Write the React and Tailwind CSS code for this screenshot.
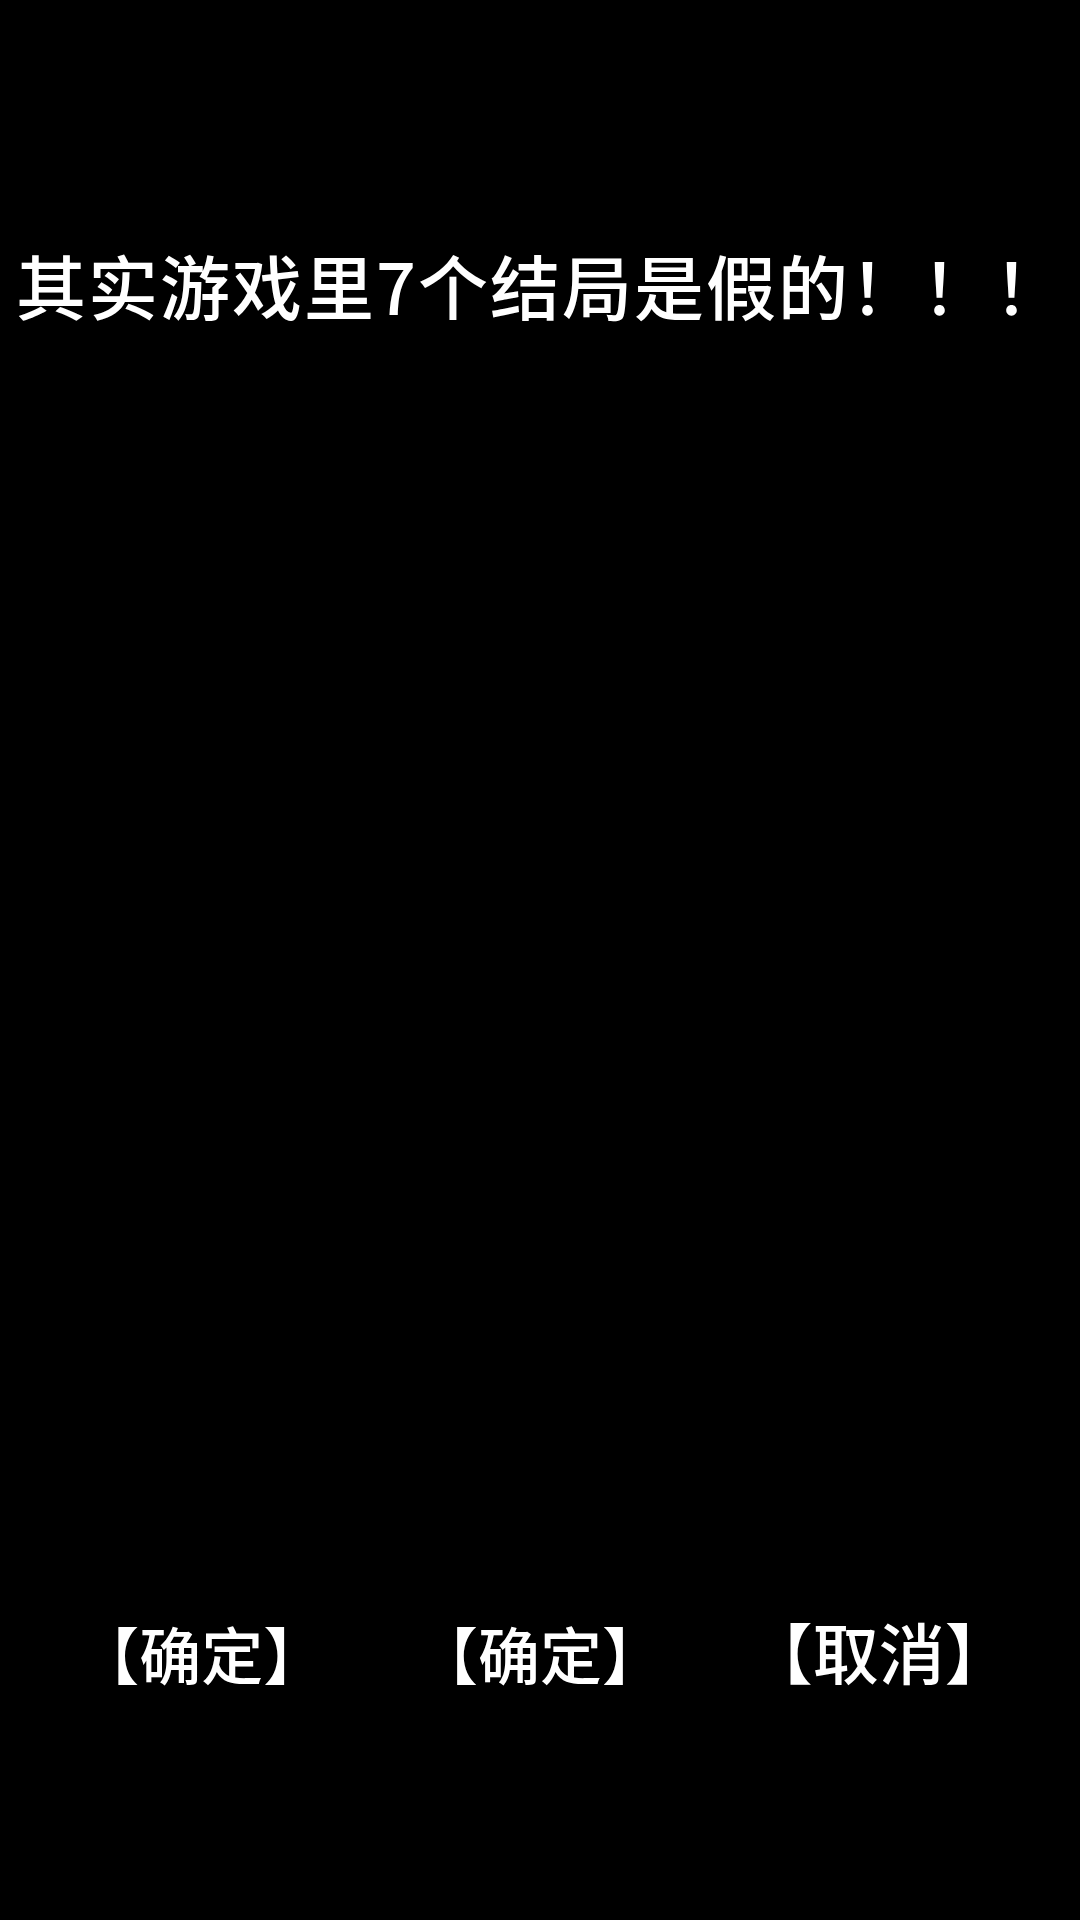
import React from 'react';

const font = { fontFamily: '"Noto Sans CJK SC", "Noto Sans", sans-serif' };

const App = () => {
  const buttons = ['【确定】', '【确定】', '【取消】'];

  return (
    <div className="w-[1080px] h-[1920px] bg-black text-white flex flex-col" style={font}>
      <h1 className="pt-[250px] pl-[16px] text-[70px] leading-none font-medium tracking-[2px] whitespace-nowrap">
        其实游戏里7个结局是假的！！！
      </h1>
      <div className="mt-auto mb-[236px] px-[32px] grid grid-cols-3">
        {buttons.map((label, i) => (
          <button
            key={i}
            className={
              i === 2
                ? 'text-[66px] leading-none font-medium text-center text-white -mt-[6px]'
                : 'text-[62px] leading-none font-medium text-center text-white'
            }
          >
            {label}
          </button>
        ))}
      </div>
    </div>
  );
};

export default App;
